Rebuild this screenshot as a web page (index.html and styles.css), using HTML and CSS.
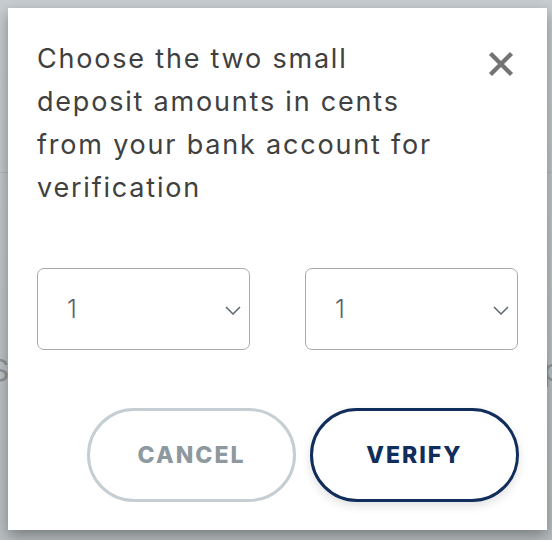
FILE: index.html
```html
<!DOCTYPE html>
<html lang="en">
<head>
<meta charset="utf-8">
<link rel="stylesheet" href="styles.css">
</head>
<body>
<div class="backdrop">
  <span class="ghost ghost-left">S</span>
  <span class="ghost ghost-right">p</span>
</div>
<div class="dialog">
  <div class="head">
    <h2 class="title">Choose the two small<br>deposit amounts in cents<br>from your bank account for<br>verification</h2>
    <button class="close" aria-label="Close">
      <svg width="26" height="26" viewBox="0 0 26 26"><path d="M2.5 2.5L23.5 23.5M23.5 2.5L2.5 23.5" stroke="#737373" stroke-width="4.4" stroke-linecap="butt"/></svg>
    </button>
  </div>
  <div class="selects">
    <div class="select"><span class="val">1</span>
      <svg class="chev" width="16" height="9" viewBox="0 0 16 9"><path d="M1 1L8 8L15 1" fill="none" stroke="#5b6870" stroke-width="1.5"/></svg>
    </div>
    <div class="select"><span class="val">1</span>
      <svg class="chev" width="16" height="9" viewBox="0 0 16 9"><path d="M1 1L8 8L15 1" fill="none" stroke="#5b6870" stroke-width="1.5"/></svg>
    </div>
  </div>
  <div class="actions">
    <button class="btn btn-cancel">CANCEL</button>
    <button class="btn btn-verify">VERIFY</button>
  </div>
</div>
</body>
</html>
```

FILE: styles.css
```css
html, body {
  margin: 0;
  padding: 0;
}
body {
  width: 552px;
  height: 540px;
  background: linear-gradient(#c6cccf, #b9bfc1);
  position: relative;
  overflow: hidden;
  font-family: "Inter", "DejaVu Sans", sans-serif;
}
.backdrop {
  position: absolute;
  inset: 0;
}
.backdrop::before {
  content: "";
  position: absolute;
  left: 0;
  right: 0;
  top: 172px;
  height: 1px;
  background: #b4babd;
}
.ghost {
  position: absolute;
  font-size: 30px;
  color: #8f9598;
  top: 352px;
}
.ghost-left { left: -10px; }
.ghost-right { left: 543px; }
.dialog {
  position: absolute;
  left: 8px;
  top: 8px;
  width: 539px;
  height: 522px;
  box-sizing: border-box;
  background: #fff;
  box-shadow: 0 6px 14px rgba(0, 0, 0, 0.35);
  padding: 29px 29px 0 29px;
  display: flex;
  flex-direction: column;
}
.head {
  display: flex;
  justify-content: space-between;
  align-items: flex-start;
}
.title {
  margin: 0;
  font-weight: 400;
  font-size: 27px;
  line-height: 43px;
  color: #404040;
  letter-spacing: 1.8px;
}
.close {
  border: 0;
  background: none;
  padding: 0;
  margin: 12px 2px 0 0;
  width: 30px;
  height: 30px;
  display: flex;
  align-items: center;
  justify-content: center;
}
.selects {
  display: flex;
  justify-content: space-between;
  margin-top: 59px;
}
.select {
  width: 213px;
  height: 82px;
  box-sizing: border-box;
  border: 1px solid #a9a9a9;
  border-radius: 7px;
  display: flex;
  align-items: center;
  justify-content: space-between;
  padding: 0 8px 0 29px;
}
.val {
  font-size: 25px;
  font-weight: 300;
  color: #55636b;
}
.chev { margin-top: 2px; }
.actions {
  display: flex;
  justify-content: flex-end;
  gap: 14px;
  margin-top: 58px;
  margin-right: -1px;
}
.btn {
  width: 209px;
  height: 94px;
  border-radius: 47px;
  background: #fff;
  font-family: "Inter", "DejaVu Sans", sans-serif;
  font-weight: 800;
  font-size: 23px;
  letter-spacing: 2px;
}
.btn-cancel {
  border: 3px solid #c5ced2;
  color: #8d999f;
}
.btn-verify {
  border: 3px solid #112d5c;
  color: #112d5c;
  box-shadow: 0 4px 10px rgba(0, 0, 0, 0.12);
}
```
